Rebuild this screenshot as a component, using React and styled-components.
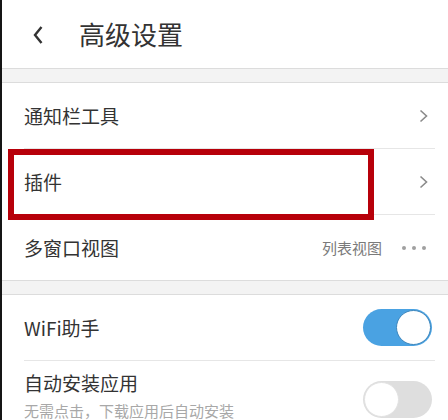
import React from "react";
import styled, { createGlobalStyle } from "styled-components";

const Global = createGlobalStyle`
  html, body {
    margin: 0;
    padding: 0;
    background: #fff;
  }
  body {
    font-family: "Noto Sans CJK SC", "Noto Sans", sans-serif;
    color: #333;
  }
`;

const App = () => {
  return (
    <>
      <Global />
      <Page>
        <Header>
          <BackIcon viewBox="0 0 10 20">
            <path d="M8.5 2 L2 10 L8.5 18" />
          </BackIcon>
          <Title>高级设置</Title>
        </Header>
        <Band />
        <Row>
          <Label>通知栏工具</Label>
          <Chevron />
        </Row>
        <Divider />
        <Marked>
          <Row>
            <Label>插件</Label>
            <Chevron />
          </Row>
          <Highlight />
        </Marked>
        <Divider />
        <Row>
          <Label>多窗口视图</Label>
          <Right>
            <Value>列表视图</Value>
            <Dots>
              <i />
              <i />
              <i />
            </Dots>
          </Right>
        </Row>
        <Band />
        <Row $tight>
          <Label>WiFi助手</Label>
          <Toggle $on>
            <Knob $on />
          </Toggle>
        </Row>
        <Divider />
        <Row $tight $tall>
          <TextBlock>
            <Label>自动安装应用</Label>
            <Sub>无需点击，下载应用后自动安装</Sub>
          </TextBlock>
          <Toggle>
            <Knob />
          </Toggle>
        </Row>
      </Page>
    </>
  );
};

const Chevron = () => (
  <ChevronSvg viewBox="0 0 9 14">
    <path d="M1.5 1.5 L7.5 7 L1.5 12.5" />
  </ChevronSvg>
);

export default App;

const Page = styled.div`
  width: 446px;
  min-height: 420px;
  border-left: 2px solid #151515;
  background: #fff;
`;

const Header = styled.div`
  height: 68px;
  display: flex;
  align-items: center;
  padding-left: 31px;
  box-sizing: border-box;
`;

const BackIcon = styled.svg`
  width: 10px;
  height: 20px;
  margin-top: 1px;
  fill: none;
  stroke: #333;
  stroke-width: 2.4;
  stroke-linejoin: miter;
`;

const Title = styled.div`
  margin-left: 36px;
  font-size: 26px;
  line-height: 30px;
  color: #333;
  letter-spacing: 0;
`;

const Band = styled.div`
  height: 13px;
  background: #f3f3f3;
  border-top: 1px solid #dcdcdc;
  border-bottom: 1px solid #dcdcdc;
`;

const Row = styled.div`
  height: ${(p) => (p.$tall ? "auto" : "65px")};
  min-height: 65px;
  display: flex;
  align-items: center;
  justify-content: space-between;
  padding: ${(p) => (p.$tall ? "10px" : "0")} ${(p) => (p.$tight ? "16px" : "20px")} 0 22px;
  box-sizing: border-box;
`;

const Label = styled.div`
  font-size: 19px;
  line-height: 24px;
  color: #333;
`;

const TextBlock = styled.div`
  display: flex;
  flex-direction: column;
  align-self: flex-start;
`;

const Sub = styled.div`
  margin-top: 6px;
  font-size: 15px;
  line-height: 20px;
  color: #a8a8a8;
`;

const Divider = styled.div`
  height: 1px;
  margin: 0 13px 0 22px;
  background: #e6e6e6;
`;

const Marked = styled.div`
  position: relative;
`;

const Highlight = styled.div`
  position: absolute;
  left: 6px;
  top: 0;
  width: 366px;
  height: 71px;
  box-sizing: border-box;
  border: 6px solid #b7000a;
  pointer-events: none;
`;

const ChevronSvg = styled.svg`
  width: 9px;
  height: 14px;
  fill: none;
  stroke: #8a8a8a;
  stroke-width: 1.6;
`;

const Right = styled.div`
  display: flex;
  align-items: center;
  gap: 20px;
`;

const Value = styled.div`
  font-size: 15px;
  line-height: 20px;
  color: #7a7a7a;
`;

const Dots = styled.div`
  display: flex;
  gap: 6px;
  margin-right: 2px;

  i {
    width: 4px;
    height: 4px;
    border-radius: 50%;
    background: #a0a0a0;
  }
`;

const Toggle = styled.div`
  width: 69px;
  height: 37px;
  border-radius: 19px;
  box-sizing: border-box;
  display: flex;
  align-items: center;
  justify-content: ${(p) => (p.$on ? "flex-end" : "flex-start")};
  padding: 0 1px;
  background: ${(p) => (p.$on ? "#4aa2e2" : "#dedede")};
  margin-top: ${(p) => (p.$on ? "0" : "2px")};
`;

const Knob = styled.div`
  width: 35px;
  height: 35px;
  border-radius: 50%;
  box-sizing: border-box;
  background: #fff;
  border: 1px solid ${(p) => (p.$on ? "#3c86bd" : "#e2e2e2")};
`;
